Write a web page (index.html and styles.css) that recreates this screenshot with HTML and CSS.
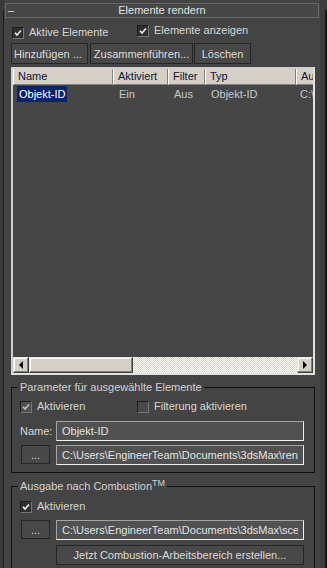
FILE: index.html
```
<!DOCTYPE html>
<html lang="de">
<head>
    <meta charset="UTF-8">
    <meta name="viewport" content="width=device-width, initial-scale=1.0">
    <title>Elemente rendern</title>
    <link rel="stylesheet" href="styles.css">
</head>
<body>
    <div class="app">
        <div class="edge-left"><span></span></div>

        <div class="panel">
            <div class="rollout-title">
                <span class="minus">–</span>
                <span class="title-text">Elemente rendern</span>
                <span></span>
            </div>

            <div class="content">
                <div class="check-row top">
                    <label class="check first">
                        <span class="box"><svg width="10" height="10" viewBox="0 0 10 10"><path d="M2 4.8 L4 7 L8 2.5" fill="none" stroke="#e8e8e8" stroke-width="1.7"/></svg></span>
                        Aktive Elemente
                    </label>
                    <label class="check">
                        <span class="box"><svg width="10" height="10" viewBox="0 0 10 10"><path d="M2 4.8 L4 7 L8 2.5" fill="none" stroke="#e8e8e8" stroke-width="1.7"/></svg></span>
                        Elemente anzeigen
                    </label>
                </div>

                <div class="btn-row">
                    <button class="btn add">Hinzufügen ...</button>
                    <button class="btn merge">Zusammenführen...</button>
                    <button class="btn del">Löschen</button>
                </div>

                <div class="list">
                    <div class="list-head">
                        <div class="col c-name">Name</div>
                        <div class="col c-act">Aktiviert</div>
                        <div class="col c-filter">Filter</div>
                        <div class="col c-type">Typ</div>
                        <div class="col c-out">Ausgabepfad</div>
                    </div>
                    <div class="list-body">
                        <div class="list-row">
                            <div class="cell c-name"><span class="selected">Objekt-ID</span></div>
                            <div class="cell c-act">Ein</div>
                            <div class="cell c-filter">Aus</div>
                            <div class="cell c-type">Objekt-ID</div>
                            <div class="cell c-out">C:\Users\EngineerTeam</div>
                        </div>
                    </div>
                    <div class="hscroll">
                        <div class="sb-btn"><span class="arrow-left"></span></div>
                        <div class="sb-thumb"></div>
                        <div class="sb-track"></div>
                        <div class="sb-btn"><span class="arrow-right"></span></div>
                    </div>
                </div>

                <fieldset class="group">
                    <legend>Parameter für ausgewählte Elemente</legend>
                    <div class="check-row">
                        <label class="check first-in">
                            <span class="box dim"><svg width="10" height="10" viewBox="0 0 10 10"><path d="M2 4.8 L4 7 L8 2.5" fill="none" stroke="#bdbdbd" stroke-width="1.7"/></svg></span>
                            Aktivieren
                        </label>
                        <label class="check">
                            <span class="box off"></span>
                            Filterung aktivieren
                        </label>
                    </div>
                    <div class="field-row name-row">
                        <span class="field-label">Name:</span>
                        <input class="field" type="text" value="Objekt-ID">
                    </div>
                    <div class="field-row path-row">
                        <button class="btn dots">...</button>
                        <input class="field" type="text" value="C:\Users\EngineerTeam\Documents\3dsMax\renderoutput\Objekt-ID.tga">
                    </div>
                </fieldset>

                <fieldset class="group second">
                    <legend>Ausgabe nach Combustion<sup>TM</sup></legend>
                    <div class="check-row">
                        <label class="check">
                            <span class="box"><svg width="10" height="10" viewBox="0 0 10 10"><path d="M2 4.8 L4 7 L8 2.5" fill="none" stroke="#f0f0f0" stroke-width="1.7"/></svg></span>
                            Aktivieren
                        </label>
                    </div>
                    <div class="field-row path-row">
                        <button class="btn dots">...</button>
                        <input class="field" type="text" value="C:\Users\EngineerTeam\Documents\3dsMax\scenes\scene.cws">
                    </div>
                    <button class="btn wide">Jetzt Combustion-Arbeitsbereich erstellen...</button>
                </fieldset>
            </div>
        </div>

        <div class="edge-right"><span></span></div>
    </div>
</body>
</html>
```

FILE: styles.css
```
body {
    margin: 0;
    background: #444;
    font-family: "Liberation Sans", Arial, sans-serif;
    font-size: 11px;
    color: #d6d6d6;
}
.app {
    display: flex;
    height: 568px;
    overflow: hidden;
}
.edge-left {
    width: 4px;
    flex: none;
    background: #3a3a3a;
}
.edge-left span {
    display: block;
    width: 1px;
    height: 100%;
    margin: 10px 0 0 3px;
    background: #1d1d1d;
}
.edge-right {
    flex: 1;
    display: flex;
    justify-content: flex-end;
    background: #3c3c3c;
}
.edge-right span {
    width: 2px;
    margin-top: 10px;
    background: #161616;
}
.panel {
    width: 316px;
    flex: none;
}

/* rollout header */
.rollout-title {
    margin: 3px 1px 0 1px;
    height: 15px;
    box-sizing: border-box;
    border: 1px solid #686868;
    background: #474747;
    display: grid;
    grid-template-columns: 14px 1fr 14px;
    line-height: 13px;
    color: #e2e2e2;
}
.minus {
    padding-left: 2px;
}
.title-text {
    text-align: center;
}

.content {
    padding: 0 5px 0 7px;
}

/* checkboxes */
.check-row {
    display: flex;
    align-items: flex-start;
}
.check-row.top {
    margin-top: 6px;
}
.check {
    display: flex;
    align-items: center;
    gap: 5px;
    height: 13px;
    line-height: 13px;
    white-space: nowrap;
}
.check.first {
    width: 125px;
    margin: 2px 0 0 1px;
}
.check.first-in {
    width: 117px;
}
.box {
    width: 12px;
    height: 12px;
    box-sizing: border-box;
    border: 1px solid #1e1e1e;
    border-right-color: #767676;
    border-bottom-color: #767676;
    background: #2f2f2f;
    flex: none;
}
.box svg {
    display: block;
}
.box.dim {
    background: #505050;
}
.box.off {
    background: #4a4a4a;
}

/* buttons */
.btn-row {
    display: flex;
    margin-top: 4px;
}
.btn {
    height: 21px;
    box-sizing: border-box;
    border: 1px solid #262626;
    background: #484848;
    color: #dcdcdc;
    font: inherit;
    padding: 0;
    cursor: pointer;
    white-space: nowrap;
}
.btn.add {
    width: 77px;
    text-align: left;
    padding-left: 2px;
}
.btn.merge {
    width: 103px;
    margin-left: 2px;
}
.btn.del {
    width: 57px;
    margin-left: 1px;
}

/* list view */
.list {
    margin-top: 3px;
    height: 308px;
    box-sizing: border-box;
    border: 2px solid #e2e2e2;
    border-top-color: #cfcfcf;
    border-left-color: #cfcfcf;
    background: #464646;
    display: flex;
    flex-direction: column;
    overflow: hidden;
}
.list-head {
    display: flex;
    height: 16px;
    flex: none;
    background: #d4d0c8;
}
.col {
    box-sizing: border-box;
    flex: none;
    border-left: 1px solid #fff;
    border-right: 1px solid #808080;
    border-bottom: 1px solid #808080;
    padding-left: 4px;
    line-height: 14px;
    color: #10103a;
    white-space: nowrap;
}
.c-name { width: 100px; }
.c-act { width: 55px; }
.c-filter { width: 37px; }
.c-type { width: 91px; }
.c-out {
    flex: 1;
    min-width: 0;
    overflow: hidden;
}
.col.c-out {
    border-right: none;
}
.list-body {
    flex: 1;
}
.list-row {
    display: flex;
    height: 17px;
    margin-top: 1px;
    line-height: 16px;
}
.cell {
    box-sizing: border-box;
    flex: none;
    padding-left: 6px;
    color: #c6c6c6;
    white-space: nowrap;
}
.cell.c-name {
    padding-left: 4px;
}
.cell.c-out {
    flex: 1;
    padding-left: 4px;
}
.selected {
    display: inline-block;
    padding: 0 2px;
    background: #0a246a;
    color: #fff;
}

/* horizontal scrollbar */
.hscroll {
    display: flex;
    height: 16px;
    flex: none;
}
.sb-btn,
.sb-thumb {
    box-sizing: border-box;
    background: #d4d0c8;
    border: 1px solid;
    border-color: #e4e4e4 #404040 #404040 #e4e4e4;
    box-shadow: inset -1px -1px #808080, inset 1px 1px #fff;
}
.sb-btn {
    width: 16px;
    flex: none;
    display: flex;
    align-items: center;
    justify-content: center;
}
.sb-thumb {
    width: 104px;
    flex: none;
}
.sb-track {
    flex: 1;
    background: repeating-conic-gradient(#d4d0c8 0 25%, #fff 0 50%) 0 0 / 2px 2px;
}
.arrow-left,
.arrow-right {
    width: 0;
    height: 0;
    border-top: 4px solid transparent;
    border-bottom: 4px solid transparent;
}
.arrow-left {
    border-right: 4px solid #000;
}
.arrow-right {
    border-left: 4px solid #000;
}

/* group boxes */
.group {
    margin: 6px 0 0 0;
    border: 1px solid #111;
    padding: 0 10px 7px 8px;
    min-width: 0;
}
.group.second {
    margin-top: 7px;
}
.group legend {
    padding: 0 2px;
    margin-left: -2px;
    line-height: 13px;
    color: #d2d2d2;
}
.group legend sup {
    font-size: 9px;
    line-height: 0;
    vertical-align: 4px;
}
.group .check-row {
    margin-top: 6px;
}
.group.second .check-row {
    margin-top: 7px;
}
.field-row {
    display: flex;
    align-items: flex-start;
}
.name-row {
    margin-top: 8px;
    align-items: center;
}
.path-row {
    margin-top: 4px;
}
.group.second .path-row {
    margin-top: 7px;
}
.field-label {
    width: 36px;
    flex: none;
}
.field {
    width: 248px;
    height: 20px;
    box-sizing: border-box;
    border: 1px solid;
    border-color: #a4a4a4 #efefef #efefef #a4a4a4;
    background: #515151;
    color: #e2e2e2;
    font: inherit;
    padding: 0 5px;
    outline: none;
}
.btn.dots {
    width: 29px;
    height: 19px;
    margin: 0 6px 0 1px;
}
.btn.wide {
    display: block;
    width: 248px;
    height: 20px;
    margin: 5px 0 0 36px;
}
```
